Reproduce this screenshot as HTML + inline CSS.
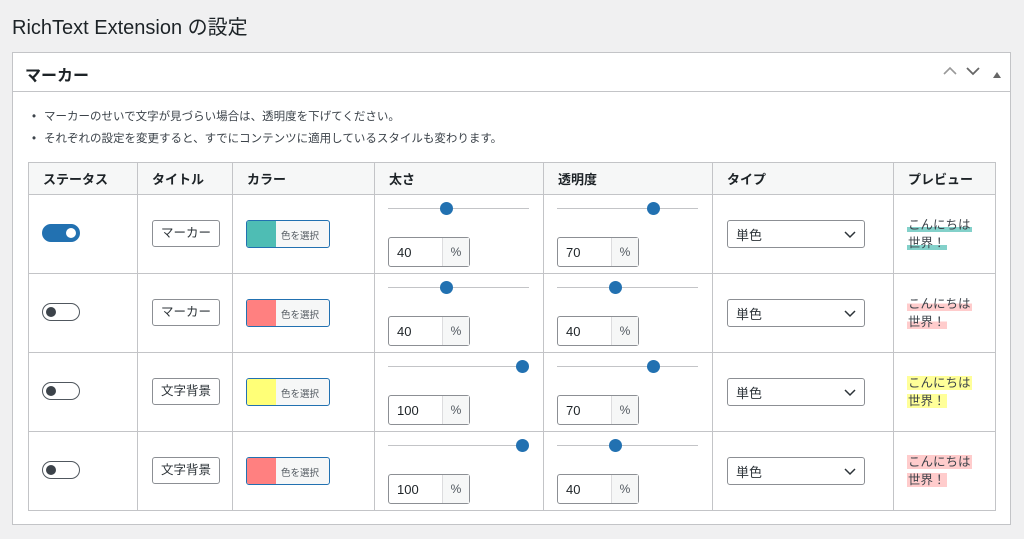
<!DOCTYPE html>
<html><head><meta charset="utf-8"><style>
*{box-sizing:border-box;margin:0;padding:0}
body{width:1024px;height:539px;background:#f0f0f1;font-family:"Liberation Sans","Noto Sans CJK JP",sans-serif;color:#1d2327;position:relative;overflow:hidden}
.h1{position:absolute;left:12px;top:11px;font-size:20px;font-weight:400;color:#1d2327}
.panel{position:absolute;left:12px;top:52px;width:999px;height:473px;background:#fff;border:1px solid #c3c4c7}
.ph{height:39px;border-bottom:1px solid #c3c4c7;padding:9px 12px;font-size:16px;font-weight:700}
.ctl{position:absolute;top:12px;font-size:12px;color:#888}
ul{position:absolute;left:19px;top:56px;font-size:11.5px;color:#3c434a;list-style:none}
ul li{height:22px;line-height:16px}
ul li:before{content:"•";margin-right:8px}
table{position:absolute;left:15px;top:109px;border-collapse:collapse;font-size:13px}
td,th{border:1px solid #c3c4c7;position:relative;vertical-align:top}
th{height:32px;text-align:left;padding:0 14px;font-weight:700;background:#f6f7f7;font-size:13px;vertical-align:middle}
td{height:79px}
.tg{position:absolute;left:13px;top:29px;width:38px;height:18px;border-radius:9px;border:1px solid #50575e;background:#fff}
.tg:after{content:"";position:absolute;left:3px;top:3px;width:10px;height:10px;border-radius:50%;background:#3c434a}
.tg.on{background:#2271b1;border-color:#2271b1}
.tg.on:after{left:23px;background:#fff}
.ti{position:absolute;left:14px;top:25px;width:68px;height:27px;border:1px solid #8c8f94;border-radius:3px;font-size:12.5px;line-height:25px;text-align:center;color:#2c3338}
.cb{position:absolute;left:13px;top:25px;width:84px;height:28px;border:1px solid #2271b1;border-radius:3px;background:#f6f7f7;overflow:hidden}
.cb i{position:absolute;left:0;top:0;bottom:0;width:29px}
.cb span{position:absolute;left:34px;top:7px;font-size:9.5px;color:#50575e}
.sl{position:absolute;left:13px;top:13px;width:141px;height:1px;background:#c3c4c7}
.sl b{position:absolute;top:-6px;width:13px;height:13px;border-radius:50%;background:#2271b1;margin-left:-6px}
.ni{position:absolute;left:13px;top:42px;width:82px;height:30px;border:1px solid #8c8f94;border-radius:3px;font-size:13px}
.ni span{position:absolute;left:8px;top:7px}
.ni em{font-style:normal;position:absolute;right:0;top:0;bottom:0;width:27px;border-left:1px solid #dcdcde;background:#f6f7f7;text-align:center;line-height:28px;font-size:12px;color:#50575e}
.se{position:absolute;left:14px;top:25px;width:138px;height:28px;border:1px solid #8c8f94;border-radius:3px;font-size:13px;padding:4px 8px;color:#2c3338}
.se svg{position:absolute;right:8px;top:10px}
.pv{position:absolute;left:13px;top:21px;font-size:12.5px;line-height:18px;color:#3c434a}
.pv span{padding:0 1px}
</style></head><body>
<div class="h1">RichText Extension の設定</div>
<div class="panel">
<div class="ph">マーカー</div>
<div class="ctl" style="left:930px"><svg width="14" height="10"><path d="M1 8 7 2 13 8" stroke="#999" stroke-width="1.6" fill="none"/></svg></div>
<div class="ctl" style="left:953px"><svg width="14" height="10"><path d="M1 2 7 8 13 2" stroke="#666" stroke-width="1.8" fill="none"/></svg></div>
<div class="ctl" style="left:980px;top:14px"><svg width="8" height="6"><path d="M0 6 4 0 8 6z" fill="#666"/></svg></div>
<ul><li>マーカーのせいで文字が見づらい場合は、透明度を下げてください。</li><li>それぞれの設定を変更すると、すでにコンテンツに適用しているスタイルも変わります。</li></ul>
<table>
<tr><th style="width:109px">ステータス</th><th style="width:95px">タイトル</th><th style="width:142px">カラー</th><th style="width:169px">太さ</th><th style="width:169px">透明度</th><th style="width:181px">タイプ</th><th style="width:102px">プレビュー</th></tr>
<tr><td><div class="tg on"></div></td><td><div class="ti">マーカー</div></td><td><div class="cb"><i style="background:#4ebdb4"></i><span>色を選択</span></div></td>
<td><div class="sl"><b style="left:41%"></b></div><div class="ni"><span>40</span><em>%</em></div></td>
<td><div class="sl"><b style="left:68%"></b></div><div class="ni"><span>70</span><em>%</em></div></td>
<td><div class="se">単色<svg width="12" height="8"><path d="M1 1 6 6 11 1" stroke="#2c3338" stroke-width="1.5" fill="none"/></svg></div></td>
<td><div class="pv"><span style="background:linear-gradient(transparent 65%,rgba(78,189,180,.7) 65%)">こんにちは</span><br><span style="background:linear-gradient(transparent 65%,rgba(78,189,180,.7) 65%)">世界！</span></div></td></tr>
<tr><td><div class="tg"></div></td><td><div class="ti">マーカー</div></td><td><div class="cb"><i style="background:#ff8080"></i><span>色を選択</span></div></td>
<td><div class="sl"><b style="left:41%"></b></div><div class="ni"><span>40</span><em>%</em></div></td>
<td><div class="sl"><b style="left:41%"></b></div><div class="ni"><span>40</span><em>%</em></div></td>
<td><div class="se">単色<svg width="12" height="8"><path d="M1 1 6 6 11 1" stroke="#2c3338" stroke-width="1.5" fill="none"/></svg></div></td>
<td><div class="pv"><span style="background:linear-gradient(transparent 45%,rgba(255,128,128,.4) 45%)">こんにちは</span><br><span style="background:linear-gradient(transparent 45%,rgba(255,128,128,.4) 45%)">世界！</span></div></td></tr>
<tr><td><div class="tg"></div></td><td><div class="ti">文字背景</div></td><td><div class="cb"><i style="background:#ffff77"></i><span>色を選択</span></div></td>
<td><div class="sl"><b style="left:95%"></b></div><div class="ni"><span>100</span><em>%</em></div></td>
<td><div class="sl"><b style="left:68%"></b></div><div class="ni"><span>70</span><em>%</em></div></td>
<td><div class="se">単色<svg width="12" height="8"><path d="M1 1 6 6 11 1" stroke="#2c3338" stroke-width="1.5" fill="none"/></svg></div></td>
<td><div class="pv"><span style="background:rgba(255,255,119,.75)">こんにちは</span><br><span style="background:rgba(255,255,119,.75)">世界！</span></div></td></tr>
<tr><td><div class="tg"></div></td><td><div class="ti">文字背景</div></td><td><div class="cb"><i style="background:#ff8080"></i><span>色を選択</span></div></td>
<td><div class="sl"><b style="left:95%"></b></div><div class="ni"><span>100</span><em>%</em></div></td>
<td><div class="sl"><b style="left:41%"></b></div><div class="ni"><span>40</span><em>%</em></div></td>
<td><div class="se">単色<svg width="12" height="8"><path d="M1 1 6 6 11 1" stroke="#2c3338" stroke-width="1.5" fill="none"/></svg></div></td>
<td><div class="pv"><span style="background:rgba(255,128,128,.4)">こんにちは</span><br><span style="background:rgba(255,128,128,.4)">世界！</span></div></td></tr>
</table>
</div>
</body></html>
